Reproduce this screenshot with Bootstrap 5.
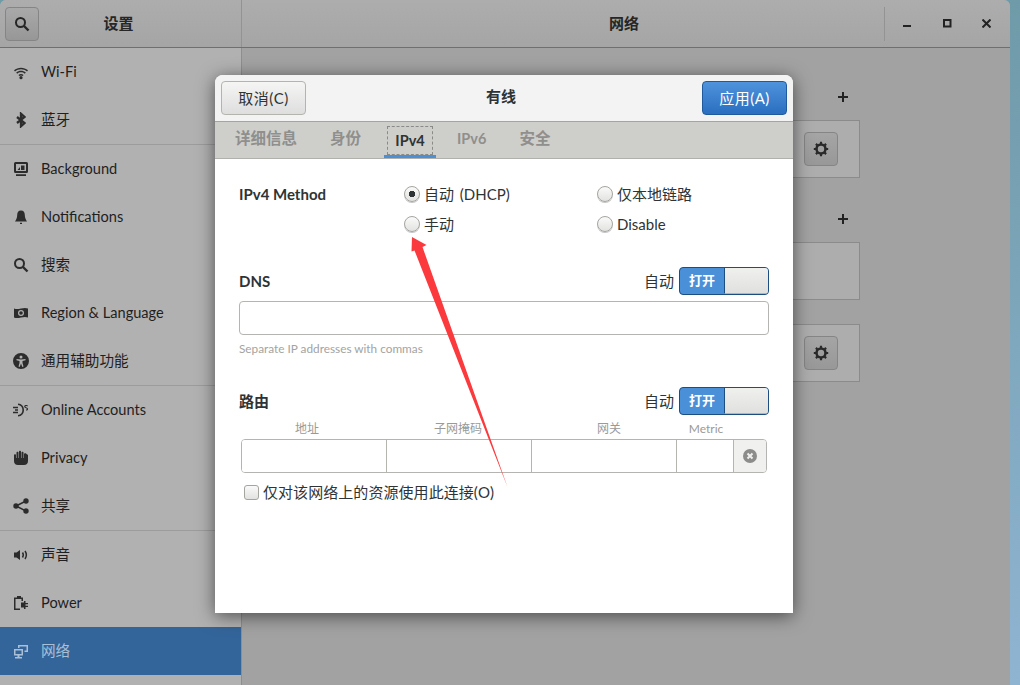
<!DOCTYPE html>
<html lang="zh-CN">
<head>
<meta charset="UTF-8">
<title>设置 - 网络</title>
<link rel="stylesheet" href="https://cdn.jsdelivr.net/npm/bootstrap@5.3.3/dist/css/bootstrap.min.css">
<style>
html, body { height: 100%; overflow: hidden; }
body {
    background: linear-gradient(#6f9aa8, #8fb4d2);
    font-family: Lato, "Noto Sans CJK SC", sans-serif;
    font-size: 15px;
    color: #2e3436;
}
.gnome-win { width: 1010px; height: 685px; background: #a2a2a2; border-radius: 6px 6px 0 0; position: relative; overflow: hidden; }
.win-top { height: 48px; background: linear-gradient(#adadad, #a5a5a5); border-bottom: 1px solid #6f6f6f; }
.top-left { width: 242px; border-right: 1px solid #939393; padding-left: 5px; }
.top-title { font-weight: 700; font-size: 15px; color: #262626; }
.top-name { padding-right: 43px; }
.top-page { padding-left: 122px; }
.top-search { width: 34px; height: 34px; border: 1px solid #858585; border-radius: 4px; background: linear-gradient(#a9a9a9, #979797); padding: 0; }
.top-ctrl { width: 126px; height: 34px; border-left: 1px solid #939393; padding: 0 19px 0 18px; }
.top-ctrl svg { display: block; }
.side-bar { width: 242px; height: 637px; background: #b1b1b1; border-right: 1px solid #8e8e8e; }
.side-row { height: 48px; padding-left: 13px; gap: 12px; color: #1f1f1f; font-size: 14.6px; }
.side-row span { padding-bottom: 1px; }
.side-row svg { width: 16px; height: 16px; flex: none; fill: #2c2c2c; }
.side-row.is-active { background: #34659a; color: #a9bfd6; }
.side-row.is-active svg { fill: #a9bfd6; }
.side-sep { height: 1px; background: #9c9c9c; }
.net-area { position: relative; flex: 1; }
.net-plus { position: absolute; left: 595px; width: 12px; height: 12px; }
.net-panel { position: absolute; left: 0; width: 618px; height: 58px; border: 1px solid #8b8b8b; background: #adadad; }
.gear-btn { position: absolute; left: 561px; top: 11px; width: 34px; height: 34px; border: 1px solid #858585; border-radius: 4px; background: linear-gradient(#a5a5a5, #989898); padding: 0; }
.wired-dialog { position: absolute; left: 215px; top: 75px; width: 578px; height: 538px; background: #fff; border-radius: 8px 8px 0 0; box-shadow: 0 3px 18px rgba(0,0,0,.55); }
.dlg-head { height: 47px; background: #f3f3f3; border-bottom: 1px solid #a4a4a0; padding: 6px 6px 0 6px; border-radius: 8px 8px 0 0; }
.dlg-title { font-weight: 700; font-size: 15px; color: #2e3436; padding: 0 6px 9px 0; }
.btn-cancel { width: 85px; height: 34px; background: linear-gradient(#f5f5f4, #dedede); border: 1px solid #b3b3b0; border-radius: 4px; color: #2e3436; font-size: 15px; letter-spacing: .5px; padding: 0; }
.btn-apply { width: 85px; height: 34px; background: linear-gradient(#4f93dc, #2a6fc0); border: 1px solid #1f5a9e; border-radius: 4px; color: #fff; font-size: 15px; letter-spacing: .5px; padding: 0; }
.dlg-tabs { height: 37px; background: #cececb; border-bottom: 1px solid #b0b0ac; padding-left: 20px; }
.dlg-tab { height: 36px; margin-right: 33px; color: #8f8f8d; font-weight: 700; font-size: 15.5px; border-bottom: 3px solid transparent; }
.dlg-tab.tab-latin { font-size: 14.5px; }
.dlg-tab.is-active { color: #2e3436; border-bottom-color: #4a90d9; margin: 0 21px 0 -10px; width: 52px; }
.tab-focus { border: 1px dashed #8a8a88; height: 29px; width: 46px; }
.dlg-body { padding: 0 24px; position: relative; }
.sec-name { font-weight: 700; font-size: 15px; color: #2e3436; }
.method-label { margin-top: 2px; }
.method-row { padding-top: 22px; height: 82px; }
.method-grid { display: grid; grid-template-columns: 193px 180px; grid-auto-rows: 30px; margin-left: 165px; }
.pick { gap: 4px; height: 30px; margin-top: -2px; font-size: 15px; word-spacing: 2px; }
.pick-dot { width: 16px; height: 16px; border-radius: 50%; border: 1px solid #a5a5a0; background: linear-gradient(#fafafa, #e2e2e0); box-shadow: 0 1px 0 #c5c5c5; flex: none; }
.pick-dot.is-on { background: radial-gradient(circle, #2e3436 3px, transparent 3.5px), linear-gradient(#fafafa, #e2e2e0); }
.dns-head { margin: 26px 0 6px; }
.route-head { margin-top: 31px; }
.toggle-wrap { gap: 5px; }
.toggle-box { width: 90px; height: 28px; border: 1px solid #1c4f80; border-radius: 4px; background: #4a90d9; overflow: hidden; }
.toggle-on { width: 44px; color: #fff; font-weight: 700; font-size: 13px; text-align: center; }
.toggle-knob { flex: 1; height: 100%; background: linear-gradient(#f0f0ef, #e0e0de); border: 1px solid #1c4f80; border-width: 0 0 0 1px; border-bottom: 1px solid #b5b5b3; }
.dns-input { height: 34px; border: 1px solid #b4b4b1; border-radius: 4px; padding: 0; }
.hint-text { font-size: 11.8px; color: #a3a3a1; margin-top: 6px; line-height: 15px; }
.route-labels { display: grid; grid-template-columns: 132px 170px 132px 62px; margin: 5px 0 1px 2px; font-size: 12px; color: #9a9a98; text-align: center; line-height: 18px; }
.route-grid { display: flex; height: 34px; margin: 0 2px; border: 1px solid #b4b4b1; border-radius: 4px; overflow: hidden; }
.route-cell { border: 0; border-right: 1px solid #b4b4b1; background: #fff; padding: 0; width: 145px; outline: 0; border-radius: 0; }
.route-cell.m-cell { width: 56.5px; }
.route-del { flex: 1; background: #f0f0ef; }
.only-net { gap: 4px; margin: 8px 0 0 5px; font-size: 15px; letter-spacing: .06px; }
.chk-box { width: 15px; height: 15px; border: 1px solid #a5a5a0; border-radius: 3px; background: linear-gradient(#fafafa, #e2e2e0); flex: none; }
.red-arrow { position: absolute; left: 0; top: 0; pointer-events: none; }
</style>
</head>
<body>
<div class="gnome-win">
    <div class="win-top d-flex">
        <div class="top-left d-flex align-items-center">
            <button class="top-search btn d-flex align-items-center justify-content-center" type="button">
                <svg width="16" height="16" viewBox="0 0 16 16"><circle cx="6.5" cy="6.5" r="4.5" fill="none" stroke="#262626" stroke-width="2"/><path d="M10 10l4.5 4.5" stroke="#262626" stroke-width="2.4"/></svg>
            </button>
            <div class="top-title top-name flex-grow-1 text-center">设置</div>
        </div>
        <div class="top-title top-page flex-grow-1 text-center align-self-center">网络</div>
        <div class="top-ctrl d-flex align-items-center justify-content-between align-self-center">
            <svg width="9" height="9" viewBox="0 0 9 9"><path d="M0 7h8" stroke="#222" stroke-width="2"/></svg>
            <svg width="9" height="9" viewBox="0 0 9 9"><rect x="1" y="1" width="6.5" height="6.5" fill="none" stroke="#222" stroke-width="2"/></svg>
            <svg width="9" height="9" viewBox="0 0 9 9"><path d="M.5.5l8 8M8.500.5l-8 8" stroke="#222" stroke-width="2"/></svg>
        </div>
    </div>
    <div class="d-flex">
        <div class="side-bar">
            <div class="side-row d-flex align-items-center"><svg viewBox="0 0 16 16"><path d="M1 6.300C4.800 2.800 11.200 2.800 15 6.300l-1 1.100C10.800 4.500 5.200 4.500 2 7.400zM3.200 8.600c2.800-2.500 6.800-2.500 9.600 0l-1 1.100c-2.200-1.900-5.400-1.900-7.600 0zM5.400 10.900c1.500-1.200 3.700-1.200 5.200 0l-1 1.100c-1-.7-2.200-.7-3.200 0z"/><circle cx="8" cy="13.700" r="1.600"/></svg><span>Wi-Fi</span></div>
            <div class="side-row d-flex align-items-center"><svg viewBox="0 0 16 16"><path d="M4 5l7.500 6L8 14.200V1.800L11.500 5 4 11" fill="none" stroke="#2c2c2c" stroke-width="2.300"/></svg><span>蓝牙</span></div>
            <div class="side-sep"></div>
            <div class="side-row d-flex align-items-center"><svg viewBox="0 0 16 16"><path d="M2.500 1h11A1.500 1.500 0 0 1 15 2.500v8a1.500 1.500 0 0 1-1.500 1.500h-11A1.500 1.500 0 0 1 1 10.500v-8A1.500 1.500 0 0 1 2.500 1zM3 3v7h10V3zM3 13.300h10V15H3z" fill-rule="evenodd"/><path d="M4.500 9L7 6v3zM8 4.500h3.500V9H8z"/></svg><span>Background</span></div>
            <div class="side-row d-flex align-items-center"><svg viewBox="0 0 16 16"><path d="M8 1.500c2.700 0 3.800 2 3.800 4.500 0 3 1.200 5 2.200 6.500H2c1-1.500 2.200-3.500 2.200-6.500C4.200 3.500 5.300 1.500 8 1.500zM7 13.800h2v1.200H7z"/></svg><span>Notifications</span></div>
            <div class="side-row d-flex align-items-center"><svg viewBox="0 0 16 16"><circle cx="6.500" cy="6.500" r="4.500" fill="none" stroke="#2c2c2c" stroke-width="2"/><path d="M10 10l4.500 4.500" stroke="#2c2c2c" stroke-width="2.400"/></svg><span>搜索</span></div>
            <div class="side-row d-flex align-items-center"><svg viewBox="0 0 16 16"><path fill-rule="evenodd" d="M1 3.500c2 .8 4 .8 7 0s5-.8 7 0v9c-2-.8-4-.8-7 0s-5 .8-7 0zM8 5a3 3 0 1 0 0 6 3 3 0 0 0 0-6zm0 1.200a1.800 1.800 0 1 1 0 3.600 1.800 1.800 0 0 1 0-3.600z"/></svg><span>Region &amp; Language</span></div>
            <div class="side-row d-flex align-items-center"><svg viewBox="0 0 16 16"><path fill-rule="evenodd" d="M8 0a8 8 0 1 1 0 16A8 8 0 0 1 8 0zm0 2.500a1.500 1.500 0 1 0 0 3 1.500 1.500 0 0 0 0-3zM3.500 6v1.300L6.500 8v2l-1 3.500 1.200.4L8 10.500l1.300 3.400 1.200-.4-1-3.500V8l3-.7V6L8 6.500z"/></svg><span>通用辅助功能</span></div>
            <div class="side-sep"></div>
            <div class="side-row d-flex align-items-center"><svg viewBox="0 0 16 16"><path d="M5 1.500c3.700 0 6 3 6 6.500s-2.300 6.500-6 6.500v-1.600c2.800 0 4.400-2.200 4.400-4.900S7.800 3.100 5 3.100zM0 4.800h5v1.400H0zm0 5h5v1.400H0zM2 7.300h3v1.400H2z"/><path d="M13 3c1.200 0 2 .5 2 1.200h-1c-.1-.2-.4-.3-.9-.3-.5 0-.8.200-.8.500 0 .8 2.800.7 2.800 2.600 0 1-.8 1.600-2.100 1.600v-1c.6 0 1-.2 1-.6 0-.9-2.800-.8-2.800-2.500 0-1 .7-1.500 1.800-1.500z"/></svg><span>Online Accounts</span></div>
            <div class="side-row d-flex align-items-center"><svg viewBox="0 0 16 16"><path d="M1 5c0-1 2-1 2 0v3h.5V2.500c0-1 2-1 2 0V8H6V1.500c0-1 2-1 2 0V8h.5V2.500c0-1 2-1 2 0V8h.5V4c0-1 2.500-1 2.500 0L15 5v6c0 2.500-1.500 4-4 4H5c-2.500 0-4-1.500-4-4z"/></svg><span>Privacy</span></div>
            <div class="side-row d-flex align-items-center"><svg viewBox="0 0 16 16"><circle cx="3" cy="8" r="2.700"/><circle cx="13" cy="3" r="2.700"/><circle cx="13" cy="13" r="2.700"/><path d="M3 8l10-5M3 8l10 5" stroke="#2c2c2c" stroke-width="1.500"/></svg><span>共享</span></div>
            <div class="side-sep"></div>
            <div class="side-row d-flex align-items-center"><svg viewBox="0 0 16 16"><path d="M1 5.500h2.500L7 3v10l-3.500-2.500H1z"/><path d="M9.500 5.500c1 1.500 1 3.500 0 5M12 4c1.700 2.500 1.700 5.500 0 8" fill="none" stroke="#2c2c2c" stroke-width="1.500"/></svg><span>声音</span></div>
            <div class="side-row d-flex align-items-center"><svg viewBox="0 0 16 16"><path d="M1 2.500h3V1h4v1.500h2V6H8.500V4H2.500v9.500H7V15H1z"/><path d="M8 7.500h3V6h1.500v2H15v1.300h-2.500v1.400H15V12h-2.500v2H11v-1.500H8z"/></svg><span>Power</span></div>
            <div class="side-row is-active d-flex align-items-center"><svg viewBox="0 0 16 16"><path d="M1 6h9v6.500H6.500V14H9v1.500H2V14h2.500v-1.500H1zm1.500 1.500V11h6V7.500zM5 2h10v7h-3.500V7.500H13.500v-4H6.500V5H5z" fill-rule="evenodd"/></svg><span>网络</span></div>
        </div>
        <div class="net-area">
            <svg class="net-plus" style="top:43px" viewBox="0 0 12 12"><path d="M6 1v10M1 6h10" stroke="#222" stroke-width="2"/></svg>
            <div class="net-panel" style="top:72px"><button class="gear-btn btn d-flex align-items-center justify-content-center" type="button"><svg width="16" height="16" viewBox="0 0 16 16"><use href="#gear-ico"/></svg></button></div>
            <svg class="net-plus" style="top:165px" viewBox="0 0 12 12"><path d="M6 1v10M1 6h10" stroke="#222" stroke-width="2"/></svg>
            <div class="net-panel" style="top:194px"></div>
            <div class="net-panel" style="top:276px"><button class="gear-btn btn d-flex align-items-center justify-content-center" type="button"><svg width="16" height="16" viewBox="0 0 16 16"><use href="#gear-ico"/></svg></button></div>
        </div>
    </div>

    <svg width="0" height="0" class="position-absolute"><defs><g id="gear-ico"><circle cx="8" cy="8" r="4.500" fill="none" stroke="#2a2a2a" stroke-width="2.600"/><path d="M8 .8v3M8 12.200v3M.8 8h3M12.200 8h3M2.900 2.900L5 5M11 11l2.100 2.100M13.100 2.900L11 5M5 11l-2.100 2.100" stroke="#2a2a2a" stroke-width="2.200"/></g></defs></svg>

    <div class="wired-dialog">
        <div class="dlg-head d-flex justify-content-between">
            <button class="btn btn-cancel" type="button">取消(C)</button>
            <div class="dlg-title align-self-center">有线</div>
            <button class="btn btn-apply" type="button">应用(A)</button>
        </div>
        <div class="dlg-tabs d-flex">
            <div class="dlg-tab d-flex align-items-center">详细信息</div>
            <div class="dlg-tab d-flex align-items-center">身份</div>
            <div class="dlg-tab tab-latin is-active d-flex align-items-end justify-content-center"><div class="tab-focus d-flex align-items-center justify-content-center">IPv4</div></div>
            <div class="dlg-tab tab-latin d-flex align-items-center">IPv6</div>
            <div class="dlg-tab d-flex align-items-center">安全</div>
        </div>
        <div class="dlg-body">
            <div class="method-row d-flex">
                <div class="sec-name method-label position-absolute">IPv4 Method</div>
                <div class="method-grid">
                    <div class="pick d-flex align-items-center"><span class="pick-dot is-on"></span>自动 (DHCP)</div>
                    <div class="pick d-flex align-items-center"><span class="pick-dot"></span>仅本地链路</div>
                    <div class="pick d-flex align-items-center"><span class="pick-dot"></span>手动</div>
                    <div class="pick d-flex align-items-center"><span class="pick-dot"></span>Disable</div>
                </div>
            </div>
            <div class="dns-head d-flex justify-content-between align-items-center">
                <div class="sec-name">DNS</div>
                <div class="toggle-wrap d-flex align-items-center"><span>自动</span><div class="toggle-box d-flex align-items-center"><span class="toggle-on">打开</span><span class="toggle-knob"></span></div></div>
            </div>
            <input class="form-control dns-input" type="text">
            <div class="hint-text">Separate IP addresses with commas</div>
            <div class="route-head d-flex justify-content-between align-items-center">
                <div class="sec-name">路由</div>
                <div class="toggle-wrap d-flex align-items-center"><span>自动</span><div class="toggle-box d-flex align-items-center"><span class="toggle-on">打开</span><span class="toggle-knob"></span></div></div>
            </div>
            <div class="route-labels"><span>地址</span><span>子网掩码</span><span>网关</span><span>Metric</span></div>
            <div class="route-grid">
                <input class="route-cell form-control" type="text">
                <input class="route-cell form-control" type="text">
                <input class="route-cell form-control" type="text">
                <input class="route-cell m-cell form-control" type="text">
                <div class="route-del d-flex align-items-center justify-content-center">
                    <svg width="14" height="14" viewBox="0 0 14 14"><circle cx="7" cy="7" r="7" fill="#8c8c8a"/><path d="M4.500 4.500l5 5M9.500 4.500l-5 5" stroke="#f0f0ef" stroke-width="2"/></svg>
                </div>
            </div>
            <div class="only-net d-flex align-items-center"><span class="chk-box"></span>仅对该网络上的资源使用此连接(O)</div>
        </div>
    </div>

    <svg class="red-arrow" width="1010" height="685" viewBox="0 0 1010 685"><path d="M412 237L426.500 245 422.500 247 507.500 487 414.500 250.500 411.500 251.500z" fill="#fb3a3e"/></svg>
</div>
<script src="https://cdn.jsdelivr.net/npm/bootstrap@5.3.3/dist/js/bootstrap.bundle.min.js"></script>
</body>
</html>
